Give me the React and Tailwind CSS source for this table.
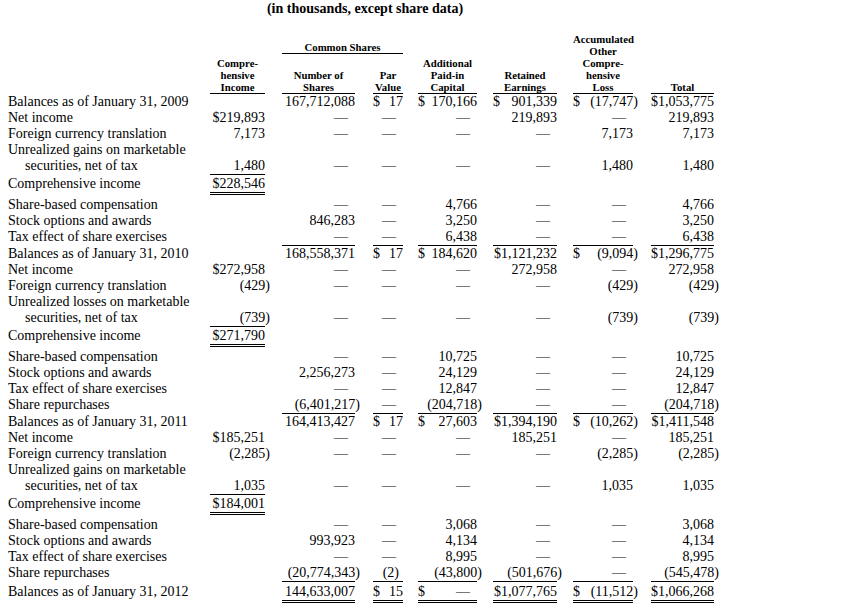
import React from "react";

const COLS = [
  "w-[55px]",
  "ml-[17px] w-[73px]",
  "ml-[18px] w-[30px]",
  "ml-[15px] w-[59px]",
  "ml-[16px] w-[64px]",
  "ml-[16px] w-[60px]",
  "ml-[18px] w-[63px]",
];

function Val({ v }) {
  if (!v) return null;
  let dollar = false;
  let rest = v;
  if (v.startsWith("$|")) {
    dollar = true;
    rest = v.slice(2);
  }
  const isDash = rest === "—";
  let cls = "";
  if (isDash) cls = "pr-[7px]";
  else if (rest === "(2)") cls = "pr-[4px]";
  else if (rest.endsWith(")")) cls = "-mr-[5px]";
  return (
    <div className="flex justify-between whitespace-nowrap">
      <span>{dollar ? "$" : ""}</span>
      <span className={cls}>{rest}</span>
    </div>
  );
}

function Row({ label, indent, vals = [], kind = "normal" }) {
  const labelCls = ["w-[202px] whitespace-nowrap", indent ? "pl-[17px]" : ""];
  if (kind === "bal") labelCls.push("border-t border-transparent");
  if (kind === "comp") labelCls.push("border-t border-transparent pt-[1px]");
  if (kind === "final") labelCls.push("border-t border-transparent pt-[2px]");
  return (
    <div className={"flex items-start" + (kind === "comp" ? " mb-[2px]" : "")}>
      <div className={labelCls.join(" ")}>
        <div className="h-[16px] leading-[16px]">{label}</div>
      </div>
      {COLS.map((c, i) => {
        const cls = [c];
        if (kind === "bal") {
          cls.push(i === 0 ? "border-t border-transparent" : "border-t border-black");
        } else if (kind === "comp") {
          cls.push(
            i === 0
              ? "border-t border-b-[3px] border-double border-black pt-[1px]"
              : "border-t border-transparent pt-[1px]"
          );
        } else if (kind === "final") {
          cls.push(
            i === 0
              ? "border-t border-transparent pt-[2px]"
              : "border-t border-b-[3px] border-double border-black pt-[2px]"
          );
        }
        return (
          <div key={i} className={cls.join(" ")}>
            <div className="h-[16px] leading-[16px]">
              <Val v={vals[i]} />
            </div>
          </div>
        );
      })}
    </div>
  );
}

const D = "—";

const ROWS = [
  { label: "Balances as of January 31, 2009", vals: ["", "167,712,088", "$|17", "$|170,166", "$|901,339", "$|(17,747)", "$1,053,775"] },
  { label: "Net income", vals: ["$219,893", D, D, D, "219,893", D, "219,893"] },
  { label: "Foreign currency translation", vals: ["7,173", D, D, D, D, "7,173", "7,173"] },
  { label: "Unrealized gains on marketable" },
  { label: "securities, net of tax", indent: true, vals: ["1,480", D, D, D, D, "1,480", "1,480"] },
  { label: "Comprehensive income", kind: "comp", vals: ["$228,546"] },
  { label: "Share-based compensation", vals: ["", D, D, "4,766", D, D, "4,766"] },
  { label: "Stock options and awards", vals: ["", "846,283", D, "3,250", D, D, "3,250"] },
  { label: "Tax effect of share exercises", vals: ["", D, D, "6,438", D, D, "6,438"] },
  { label: "Balances as of January 31, 2010", kind: "bal", vals: ["", "168,558,371", "$|17", "$|184,620", "$1,121,232", "$|(9,094)", "$1,296,775"] },
  { label: "Net income", vals: ["$272,958", D, D, D, "272,958", D, "272,958"] },
  { label: "Foreign currency translation", vals: ["(429)", D, D, D, D, "(429)", "(429)"] },
  { label: "Unrealized losses on marketable" },
  { label: "securities, net of tax", indent: true, vals: ["(739)", D, D, D, D, "(739)", "(739)"] },
  { label: "Comprehensive income", kind: "comp", vals: ["$271,790"] },
  { label: "Share-based compensation", vals: ["", D, D, "10,725", D, D, "10,725"] },
  { label: "Stock options and awards", vals: ["", "2,256,273", D, "24,129", D, D, "24,129"] },
  { label: "Tax effect of share exercises", vals: ["", D, D, "12,847", D, D, "12,847"] },
  { label: "Share repurchases", vals: ["", "(6,401,217)", D, "(204,718)", D, D, "(204,718)"] },
  { label: "Balances as of January 31, 2011", kind: "bal", vals: ["", "164,413,427", "$|17", "$|27,603", "$1,394,190", "$|(10,262)", "$1,411,548"] },
  { label: "Net income", vals: ["$185,251", D, D, D, "185,251", D, "185,251"] },
  { label: "Foreign currency translation", vals: ["(2,285)", D, D, D, D, "(2,285)", "(2,285)"] },
  { label: "Unrealized gains on marketable" },
  { label: "securities, net of tax", indent: true, vals: ["1,035", D, D, D, D, "1,035", "1,035"] },
  { label: "Comprehensive income", kind: "comp", vals: ["$184,001"] },
  { label: "Share-based compensation", vals: ["", D, D, "3,068", D, D, "3,068"] },
  { label: "Stock options and awards", vals: ["", "993,923", D, "4,134", D, D, "4,134"] },
  { label: "Tax effect of share exercises", vals: ["", D, D, "8,995", D, D, "8,995"] },
  { label: "Share repurchases", vals: ["", "(20,774,343)", "(2)", "(43,800)", "(501,676)", D, "(545,478)"] },
  { label: "Balances as of January 31, 2012", kind: "final", vals: ["", "144,633,007", "$|15", "$|—", "$1,077,765", "$|(11,512)", "$1,066,268"] },
];

export default function App() {
  return (
    <div className="w-[851px] h-[607px] overflow-hidden bg-white text-black font-['Liberation_Serif','Times_New_Roman',serif]">
      <div className="h-[33px] w-[730px] text-center">
        <div className="pt-[1px] text-[14px] leading-[16px] font-bold">
          (in thousands, except share data)
        </div>
      </div>
      <div className="flex items-end pl-[8px] font-bold text-[10.75px] leading-[12px]">
        <div className="w-[202px]" />
        <div className="w-[55px] border-b border-black text-center">
          Compre-
          <br />
          hensive
          <br />
          Income
        </div>
        <div className="ml-[17px] w-[121px] flex flex-col">
          <div className="border-b border-black text-center whitespace-nowrap">Common Shares</div>
          <div className="mt-[15px] flex items-end">
            <div className="w-[73px] border-b border-black text-center whitespace-nowrap">
              Number of
              <br />
              Shares
            </div>
            <div className="ml-[18px] w-[30px] border-b border-black text-center">
              Par
              <br />
              Value
            </div>
          </div>
        </div>
        <div className="ml-[15px] w-[59px] border-b border-black text-center">
          Additional
          <br />
          Paid-in
          <br />
          Capital
        </div>
        <div className="ml-[16px] w-[64px] border-b border-black text-center">
          Retained
          <br />
          Earnings
        </div>
        <div className="ml-[16px] w-[60px] border-b border-black text-center">
          Accumulated
          <br />
          Other
          <br />
          Compre-
          <br />
          hensive
          <br />
          Loss
        </div>
        <div className="ml-[18px] w-[63px] border-b border-black text-center">Total</div>
      </div>
      <div className="pl-[8px] text-[14px]">
        {ROWS.map((r, i) => (
          <Row key={i} {...r} />
        ))}
      </div>
    </div>
  );
}
